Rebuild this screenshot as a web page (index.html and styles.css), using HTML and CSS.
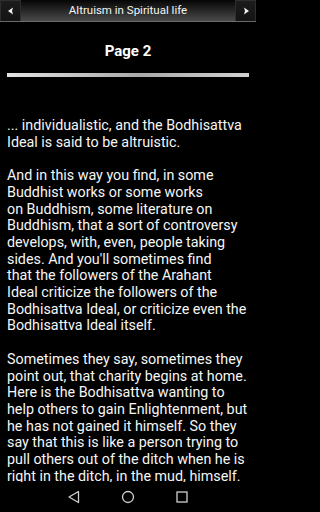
FILE: index.html
```html
<!DOCTYPE html>
<html>
<head>
<meta charset="utf-8">
<link rel="stylesheet" href="styles.css">
</head>
<body>
<div class="screen">
  <header class="topbar">
    <div class="nav-btn">
      <svg width="8" height="8" viewBox="0 0 8 8"><polygon points="6,0.5 1,4 6,7.5 5,4" fill="#f2f2f2"/></svg>
    </div>
    <div class="title">Altruism in Spiritual life</div>
    <div class="nav-btn">
      <svg width="8" height="8" viewBox="0 0 8 8"><polygon points="2,0.5 7,4 2,7.5 3,4" fill="#f2f2f2"/></svg>
    </div>
  </header>
  <main class="content">
    <h1 class="page-title">Page 2</h1>
    <div class="progress"></div>
    <div class="text">
      <p>... individualistic, and the Bodhisattva<br>Ideal is said to be altruistic.</p>
      <p>And in this way you find, in some<br>Buddhist works or some works<br>on Buddhism, some literature on<br>Buddhism, that a sort of controversy<br>develops, with, even, people taking<br>sides. And you'll sometimes find<br>that the followers of the Arahant<br>Ideal criticize the followers of the<br>Bodhisattva Ideal, or criticize even the<br>Bodhisattva Ideal itself.</p>
      <p>Sometimes they say, sometimes they<br>point out, that charity begins at home.<br>Here is the Bodhisattva wanting to<br>help others to gain Enlightenment, but<br>he has not gained it himself. So they<br>say that this is like a person trying to<br>pull others out of the ditch when he is<br>right in the ditch, in the mud, himself.</p>
    </div>
  </main>
  <nav class="sysbar">
    <svg width="14" height="14" viewBox="0 0 14 14"><polygon points="11.5,1.5 11.5,12.5 2,7" fill="none" stroke="#cfcfcf" stroke-width="1.3" stroke-linejoin="round"/></svg>
    <svg width="14" height="14" viewBox="0 0 14 14"><circle cx="7" cy="7" r="5.5" fill="none" stroke="#cfcfcf" stroke-width="1.3"/></svg>
    <svg width="14" height="14" viewBox="0 0 14 14"><rect x="2" y="2" width="10" height="10" fill="none" stroke="#cfcfcf" stroke-width="1.3"/></svg>
  </nav>
</div>
</body>
</html>
```
FILE: styles.css
```css
* { box-sizing: border-box; }
html, body { margin: 0; padding: 0; background: #000; }
body { font-family: Roboto, "Noto Sans", sans-serif; color: #fff; }
.screen { width: 256px; height: 512px; display: flex; flex-direction: column; background: #000; overflow: hidden; }
.topbar {
  height: 22px; display: flex; align-items: stretch;
  background: linear-gradient(#050505, #4a4a4a);
  border-bottom: 1px solid #6a6a6a;
}
.nav-btn {
  width: 21px; display: flex; align-items: center; justify-content: center;
  background: linear-gradient(#1c1c1c, #141414);
  border: 1px solid #2e2e2e; border-bottom: none;
}
.title { flex: 1; text-align: center; font-size: 11.5px; line-height: 21px; color: #f4f4f4; }
.content { flex: 1; overflow: hidden; }
.page-title { margin: 20px 0 0; text-align: center; font-size: 15px; line-height: 18px; font-weight: bold; }
.progress {
  margin: 13px 7px 0; height: 4px;
  background: linear-gradient(to right, #e2e2e2, #a9a9a9 55%, #d2d2d2);
}
.text { margin-top: 40px; padding: 0 7px; font-size: 14.3px; line-height: 16.7px; white-space: nowrap; color: #f6f6f6; }
.text p { margin: 0 0 16.7px; }
.sysbar { height: 30px; display: flex; align-items: center; justify-content: center; gap: 40px; background: #000; }
```
